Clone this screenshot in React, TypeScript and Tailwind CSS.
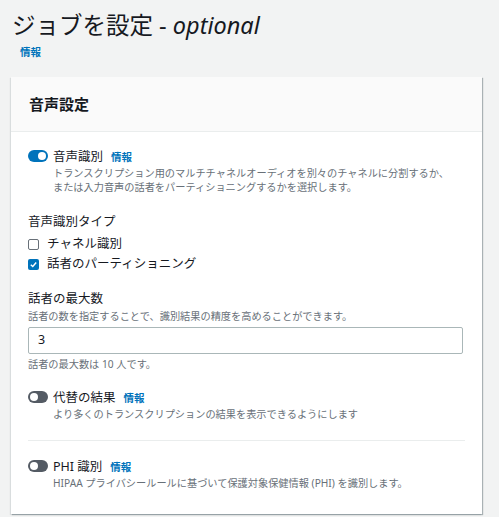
import React from 'react';

const FONT = { fontFamily: '"Noto Sans", "Noto Sans CJK JP", sans-serif' };

function Toggle({ on }: { on: boolean }) {
  return (
    <span
      className={
        'relative mt-[2px] inline-block h-[12px] w-[20px] shrink-0 rounded-full ' +
        (on ? 'bg-[#0073bb]' : 'bg-[#545b64]')
      }
    >
      <span
        className={
          'absolute top-[2px] h-[8px] w-[8px] rounded-full bg-white ' + (on ? 'left-[10px]' : 'left-[2px]')
        }
      />
    </span>
  );
}

function Info() {
  return <span className="ml-[8px] text-[10.5px] font-bold text-[#0073bb]">情報</span>;
}

function ToggleRow({ on, label, desc }: { on: boolean; label: string; desc: React.ReactNode }) {
  return (
    <div className="flex gap-[5px]">
      <Toggle on={on} />
      <div>
        <div className="text-[12.5px] leading-[17px] text-[#16191f]">
          {label}
          <Info />
        </div>
        <div className="text-[10.2px] leading-[14px] text-[#687078]">{desc}</div>
      </div>
    </div>
  );
}

function Checkbox({ checked, label }: { checked: boolean; label: string }) {
  return (
    <div className="flex h-[20px] items-center gap-[8px] text-[12.5px] text-[#16191f]">
      {checked ? (
        <span className="flex h-[11px] w-[11px] items-center justify-center rounded-[2px] bg-[#0073bb]">
          <svg viewBox="0 0 10 10" className="h-[9px] w-[9px]">
            <path d="M2 5.2 L4.2 7.3 L8 2.8" fill="none" stroke="white" strokeWidth="1.6" />
          </svg>
        </span>
      ) : (
        <span className="h-[11px] w-[11px] rounded-[2px] border border-[#687078] bg-white" />
      )}
      <span>{label}</span>
    </div>
  );
}

export default function App() {
  return (
    <div className="h-[517px] w-[499px] bg-[#f2f3f3] pl-[11px] pt-[10px]" style={FONT}>
      <h1 className="pl-[1px] text-[23.5px] leading-[30px] text-[#16191f]">
        ジョブを設定 - <i>optional</i>
      </h1>
      <div className="ml-[9px] mt-[5px] text-[10.5px] font-bold leading-[14px] text-[#0073bb]">情報</div>

      <div className="mt-[18px] w-[471px] bg-white shadow-[1px_1px_1px_0_rgba(0,28,36,0.3),-1px_1px_1px_0_rgba(0,28,36,0.1)]">
        <div className="border-b border-[#eaeded] bg-[#fafafa] px-[18px] py-[17px] text-[15px] font-bold leading-[20px] text-[#16191f]">
          音声設定
        </div>
        <div className="pb-[24px] pl-[17px] pr-[19px] pt-[16px]">
          <ToggleRow
            on
            label="音声識別"
            desc={
              <>
                トランスクリプション用のマルチチャネルオーディオを別々のチャネルに分割するか、
                <br />
                または入力音声の話者をパーティショニングするかを選択します。
              </>
            }
          />

          <div className="mt-[19px] text-[12.5px] leading-[17px] text-[#16191f]">音声識別タイプ</div>
          <div className="mt-[4px]">
            <Checkbox checked={false} label="チャネル識別" />
            <Checkbox checked label="話者のパーティショニング" />
          </div>

          <div className="mt-[16px] text-[12.5px] leading-[17px] text-[#16191f]">話者の最大数</div>
          <div className="mt-[2px] text-[10.2px] leading-[14px] text-[#687078]">
            話者の数を指定することで、識別結果の精度を高めることができます。
          </div>
          <div className="mt-[4px] flex h-[27px] w-[435px] items-center rounded-[2px] border border-[#aab7b8] px-[9px] text-[12.5px] text-[#16191f]">
            3
          </div>
          <div className="mt-[3px] text-[10.2px] leading-[14px] text-[#687078]">話者の最大数は 10 人です。</div>

          <div className="mt-[18px]">
            <ToggleRow on={false} label="代替の結果" desc="より多くのトランスクリプションの結果を表示できるようにします" />
          </div>

          <div className="mt-[19px] h-px w-[437px] bg-[#eaeded]" />

          <div className="mt-[17px]">
            <ToggleRow
              on={false}
              label="PHI 識別"
              desc="HIPAA プライバシールールに基づいて保護対象保健情報 (PHI) を識別します。"
            />
          </div>
        </div>
      </div>
    </div>
  );
}
